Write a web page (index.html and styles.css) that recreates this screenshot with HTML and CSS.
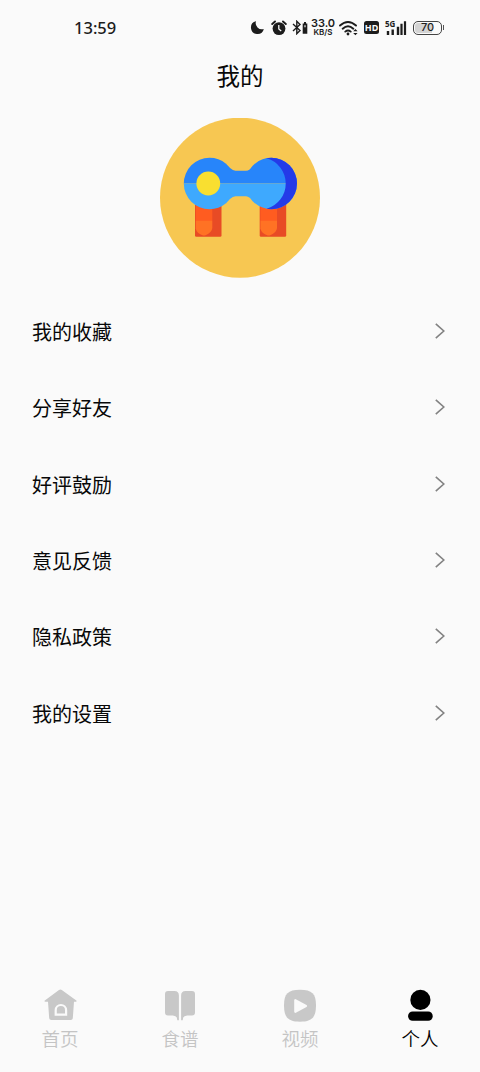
FILE: index.html
```html
<!DOCTYPE html>
<html lang="zh-CN">
<head>
<meta charset="utf-8">
<title>我的</title>
<link rel="stylesheet" href="styles.css">
</head>
<body>
<div class="screen">
  <header class="status">
    <span class="time">13:59</span>
    <div class="indicators">
      <svg class="moon" width="15" height="15" viewBox="0 0 15 15"><path d="M6 1.2A6.5 6.5 0 1 0 13.8 9 6.2 6.2 0 0 1 6 1.2Z" fill="#1c1c1c"/></svg>
      <svg class="alarm" width="16" height="16" viewBox="0 0 16 16"><circle cx="8" cy="8.6" r="6.4" fill="#1c1c1c"/><path d="M1.2 4 4 1.5M14.8 4 12 1.5" stroke="#1c1c1c" stroke-width="1.9" stroke-linecap="round"/><path d="M7.8 5v4l2.4 2" fill="none" stroke="#fafafa" stroke-width="1.3"/></svg>
      <svg class="bluetooth" width="16" height="15" viewBox="0 0 16 15"><path d="M1 4 8 10.5 4.800 13.700V1.300L8 4.500 1 11" fill="none" stroke="#1c1c1c" stroke-width="1.4"/><path d="M12 2h2v1.400h1.300v10.300h-4.600V3.400H12Z" fill="#1c1c1c"/><path d="M12 5.200h2v2h-2Z" fill="#999"/></svg>
      <div class="speed"><span class="rate">33.0</span><span class="unit">KB/S</span></div>
      <svg class="wifi" width="20" height="16" viewBox="0 0 20 16"><path d="M1 5.500Q9 -1.700 17 5.500M3.700 8.700Q9 3.900 14.300 8.700M6.300 11.600Q9 9.300 11.700 11.600" fill="none" stroke="#1c1c1c" stroke-width="1.9" stroke-linecap="round"/><circle cx="9" cy="14" r="1.4" fill="#1c1c1c"/><path d="m14.200 11.200 2.200-2.300 2.200 2.300ZM14.200 12.900h4.400l-2.200 2.300Z" fill="#1c1c1c"/></svg>
      <span class="hd">HD</span>
      <div class="signal"><span class="gen">5G</span>
        <svg width="22" height="16" viewBox="0 0 22 16"><path d="M3 11v4M7.700 9.400V15M13 6.800V15" stroke="#1c1c1c" stroke-width="2.400"/><path d="M16.500 3.800V15M20 1.300V15" stroke="#1c1c1c" stroke-width="2.200"/></svg>
      </div>
      <div class="battery"><span class="level">70</span></div><i class="battery-tip"></i>
    </div>
  </header>
  <h1 class="title">我的</h1>
  <svg class="avatar" width="160" height="160" viewBox="160 118 160 160">
    <defs>
      <clipPath id="body"><circle cx="209.500" cy="183.500" r="25.700"/><circle cx="271.300" cy="183.500" r="25.700"/><path d="M226 163.500Q231.500 170.800 235.500 170.800H246Q250 170.800 255 163.500V203.500Q250 196.300 246 196.300H235.500Q231.500 196.300 226 203.500Z"/></clipPath>
      <clipPath id="lens"><circle cx="271.300" cy="183.500" r="25.700"/></clipPath>
      <g id="leg"><path d="M195 200h26.500v35.500q0 1.300-1.300 1.300h-23.900q-1.300 0-1.300-1.300Z" fill="#e84b25"/><path d="M195.700 205H212.300v16H195.700Z" fill="#ff5c20"/><path d="M195.700 220.700H212.300V228q-.5 5-7.300 7.500h-2q-6.300-2-7.300-7Z" fill="#ff7224"/></g>
    </defs>
    <circle cx="240" cy="197.700" r="80" fill="#f7c752"/>
    <use href="#leg"/><use href="#leg" x="64.700"/>
    <g clip-path="url(#body)"><path d="M180 155h120v28.500H180Z" fill="#2785fa"/><path d="M180 183.500h120V212H180Z" fill="#3ea9fe"/></g>
    <path d="M266.700 155H300v58h-33.300v-4.300a26.200 26.200 0 0 0 0-50.400Z" fill="#243ae8" clip-path="url(#lens)"/>
    <circle cx="208.300" cy="183.500" r="11.900" fill="#f9df30"/>
  </svg>
  <main class="menu">
    <div class="row"><span>我的收藏</span><svg class="chevron" viewBox="0 0 10 16"><path d="m.8.8 8 7.200-8 7.200"/></svg></div>
    <div class="row"><span>分享好友</span><svg class="chevron" viewBox="0 0 10 16"><path d="m.8.8 8 7.200-8 7.200"/></svg></div>
    <div class="row"><span>好评鼓励</span><svg class="chevron" viewBox="0 0 10 16"><path d="m.8.8 8 7.200-8 7.200"/></svg></div>
    <div class="row"><span>意见反馈</span><svg class="chevron" viewBox="0 0 10 16"><path d="m.8.8 8 7.200-8 7.200"/></svg></div>
    <div class="row"><span>隐私政策</span><svg class="chevron" viewBox="0 0 10 16"><path d="m.8.8 8 7.200-8 7.200"/></svg></div>
    <div class="row"><span>我的设置</span><svg class="chevron" viewBox="0 0 10 16"><path d="m.8.8 8 7.200-8 7.200"/></svg></div>
  </main>
  <nav class="tabs">
    <div class="tab"><svg class="tab-icon" viewBox="0 0 36 36"><path d="M19.800 3 34.300 13.500q.8 1-.4 1.200H32L30.800 31.200q-.2 1.700-2 1.700H9.200q-1.700 0-2-1.700L6 14.700H3.200q-1.200-.2-.4-1.200L17 3q1.400-1 2.800 0Z" fill="#c8c8c8"/><path d="M13.700 27.700v-4.500a5.200 5.200 0 0 1 10.400 0v4.500Z" fill="#c8c8c8" stroke="#fafafa" stroke-width="2.200"/></svg><span>首页</span></div>
    <div class="tab"><svg class="tab-icon" viewBox="0 0 36 36"><path d="M6 4h6.500q4.400 0 4.400 4.500v24.700h-1.600q0-4.700-4.500-4.700H6q-3 0-3-3V7q0-3 3-3ZM30 4h-6.500q-4.400 0-4.400 4.500v24.700h1.600q0-4.700 4.500-4.700H30q3 0 3-3V7q0-3-3-3Z" fill="#c8c8c8"/></svg><span>食谱</span></div>
    <div class="tab"><svg class="tab-icon" viewBox="0 0 36 36"><path d="M18 2.700C30 2.700 34 6.700 34 18.500S30 34.700 18 34.700 2 30.300 2 18.500 6 2.700 18 2.700Z" fill="#c8c8c8"/><path d="M13.300 13.200v11.600L24 19Z" fill="#fafafa" stroke="#fafafa" stroke-width="2.200" stroke-linejoin="round"/></svg><span>视频</span></div>
    <div class="tab active"><svg class="tab-icon" viewBox="0 0 36 36"><circle cx="18.400" cy="12.900" r="10.100"/><rect x="6.100" y="24.400" width="24.600" height="9.400" rx="4.500"/></svg><span>个人</span></div>
  </nav>
</div>
</body>
</html>
```
FILE: styles.css
```css
* { box-sizing: border-box; }
body { margin: 0; background: #fafafa; color: #080808; font-family: "Noto Sans", "Noto Sans CJK SC", sans-serif; }
svg { display: block; flex-shrink: 0; }
.screen { width: 480px; height: 1072px; display: flex; flex-direction: column; align-items: center; background: #fafafa; overflow: hidden; }
.status { width: 100%; height: 56px; padding: 0 36px 1px 74px; display: flex; align-items: center; justify-content: space-between; color: #1c1c1c; }
.time { font: 500 16.500px/24px "Noto Sans", sans-serif; }
.indicators { display: flex; align-items: center; }
.moon { margin-right: 6px; }
.alarm { margin-right: 5px; }
.bluetooth { margin-right: 3px; }
.speed { display: flex; flex-direction: column; align-items: center; width: 24px; font-family: Inter, sans-serif; font-weight: 600; margin-right: 4px; }
.rate { font-size: 11px; line-height: 9px; }
.unit { font-size: 8px; line-height: 8px; }
.wifi { margin-right: 5px; }
.hd { width: 15px; height: 13px; border-radius: 2.500px; background: #1c1c1c; color: #fafafa; font: 700 9px/13px "Noto Sans", sans-serif; text-align: center; margin-right: 6px; }
.signal { position: relative; margin-right: 6px; }
.gen { position: absolute; left: 0; top: 0; font: 700 8px/8px "Noto Sans", sans-serif; }
.battery { width: 29px; height: 14px; border: 1.500px solid #444; border-radius: 5px; background: linear-gradient(90deg, #d4d4d4 68%, #fafafa 68%); display: flex; align-items: center; justify-content: center; box-shadow: inset 0 0 0 1px #fafafa; }
.battery-tip { width: 1px; height: 5px; background: #555; margin: 0 0 0 1px; }
.level { font: 500 11px/11px Inter, sans-serif; }
.title { margin: 0; height: 40px; font-size: 23.500px; line-height: 38px; font-weight: 400; font-family: "Noto Sans CJK SC", sans-serif; }
.avatar { margin-top: 22px; }
.menu { width: 100%; margin-top: 15px; padding: 0 35px 0 32px; font-family: "Noto Sans CJK SC", sans-serif; }
.row { height: 76.300px; display: flex; align-items: center; justify-content: space-between; font-size: 20px; line-height: 30px; }
.row span { padding-top: 2px; }
.chevron { width: 10px; height: 16px; fill: none; stroke: #828282; stroke-width: 1.600; }
.tabs { width: 100%; margin-top: auto; height: 85px; display: grid; grid-template-columns: repeat(4, 1fr); }
.tab { display: flex; flex-direction: column; align-items: center; color: #c4c4c4; font: 350 18.500px/30px "Noto Sans CJK SC", sans-serif; }
.tab-icon { width: 36px; height: 36px; }
.active { color: #000; }
```
